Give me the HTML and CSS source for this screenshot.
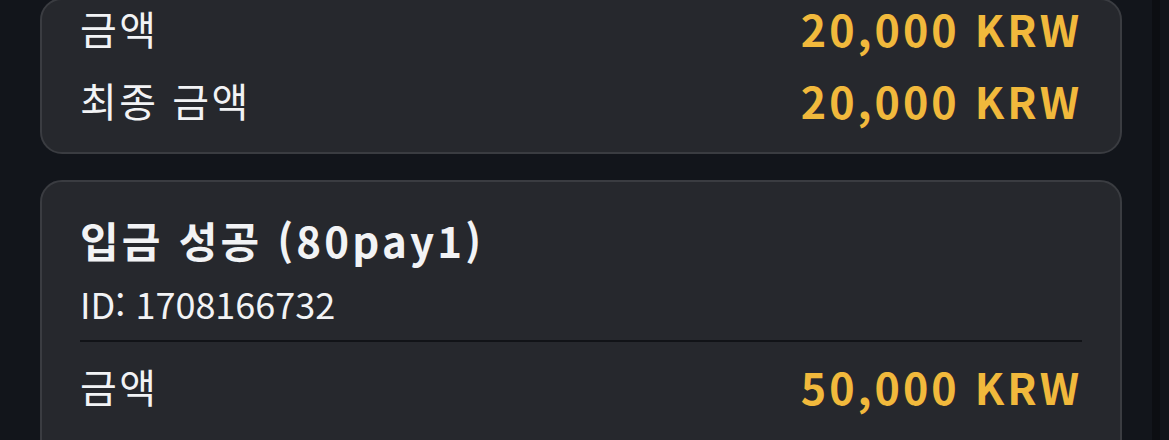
FILE: index.html
```html
<!DOCTYPE html>
<html lang="ko">
<head>
    <meta charset="UTF-8">
    <meta name="viewport" content="width=device-width, initial-scale=1.0">
    <title>입금 내역</title>
    <link rel="stylesheet" href="styles.css">
</head>
<body>
    <div class="page">
        <div class="feed">
            <div class="card">
                <div class="row">
                    <span class="label">금액</span>
                    <span class="amount">20,000 KRW</span>
                </div>
                <div class="row">
                    <span class="label">최종 금액</span>
                    <span class="amount">20,000 KRW</span>
                </div>
            </div>

            <div class="card">
                <div class="title">입금 성공 (80pay1)</div>
                <div class="sub">ID: 1708166732</div>
                <div class="line"></div>
                <div class="row">
                    <span class="label">금액</span>
                    <span class="amount">50,000 KRW</span>
                </div>
                <div class="row">
                    <span class="label">최종 금액</span>
                    <span class="amount">50,000 KRW</span>
                </div>
            </div>
        </div>
        <div class="track"></div>
    </div>
</body>
</html>
```

FILE: styles.css
```css
* {
    box-sizing: border-box;
}
html, body {
    margin: 0;
    padding: 0;
    height: 100%;
    overflow: hidden;
}
body {
    background-color: #12151b;
    color: #f2f3f5;
    font-family: "Noto Sans CJK KR", "Noto Sans", sans-serif;
}
.page {
    display: flex;
    height: 100%;
    padding-right: 9px;
}
/* list is scrolled a little, first card starts above the view */
.feed {
    flex: 1;
    display: flex;
    flex-direction: column;
    gap: 26px;
    padding: 0 30px 0 40px;
    margin-top: -2px;
}
.track {
    width: 8px;
    background-color: #0c0e12;
}
.card {
    background-color: #26282d;
    border: 2px solid #3a3c41;
    border-radius: 22px;
    padding: 0 38px 24px 38px;
}
.card + .card {
    padding-top: 30px;
}
.row {
    display: flex;
    justify-content: space-between;
    align-items: center;
    height: 56px;
    margin-top: 16px;
}
.card .row:first-child {
    margin-top: 0;
}
.label {
    font-size: 40px;
    letter-spacing: 2.5px;
}
.amount {
    font-size: 43px;
    font-weight: bold;
    color: #f1b93c;
    letter-spacing: 3px;
}
.title {
    font-size: 42px;
    font-weight: bold;
    line-height: 56px;
    letter-spacing: 3.2px;
}
.sub {
    font-size: 36px;
    line-height: 44px;
    margin-top: 13px;
}
.line {
    height: 2px;
    background-color: #111317;
    margin-top: 15px;
}
```
